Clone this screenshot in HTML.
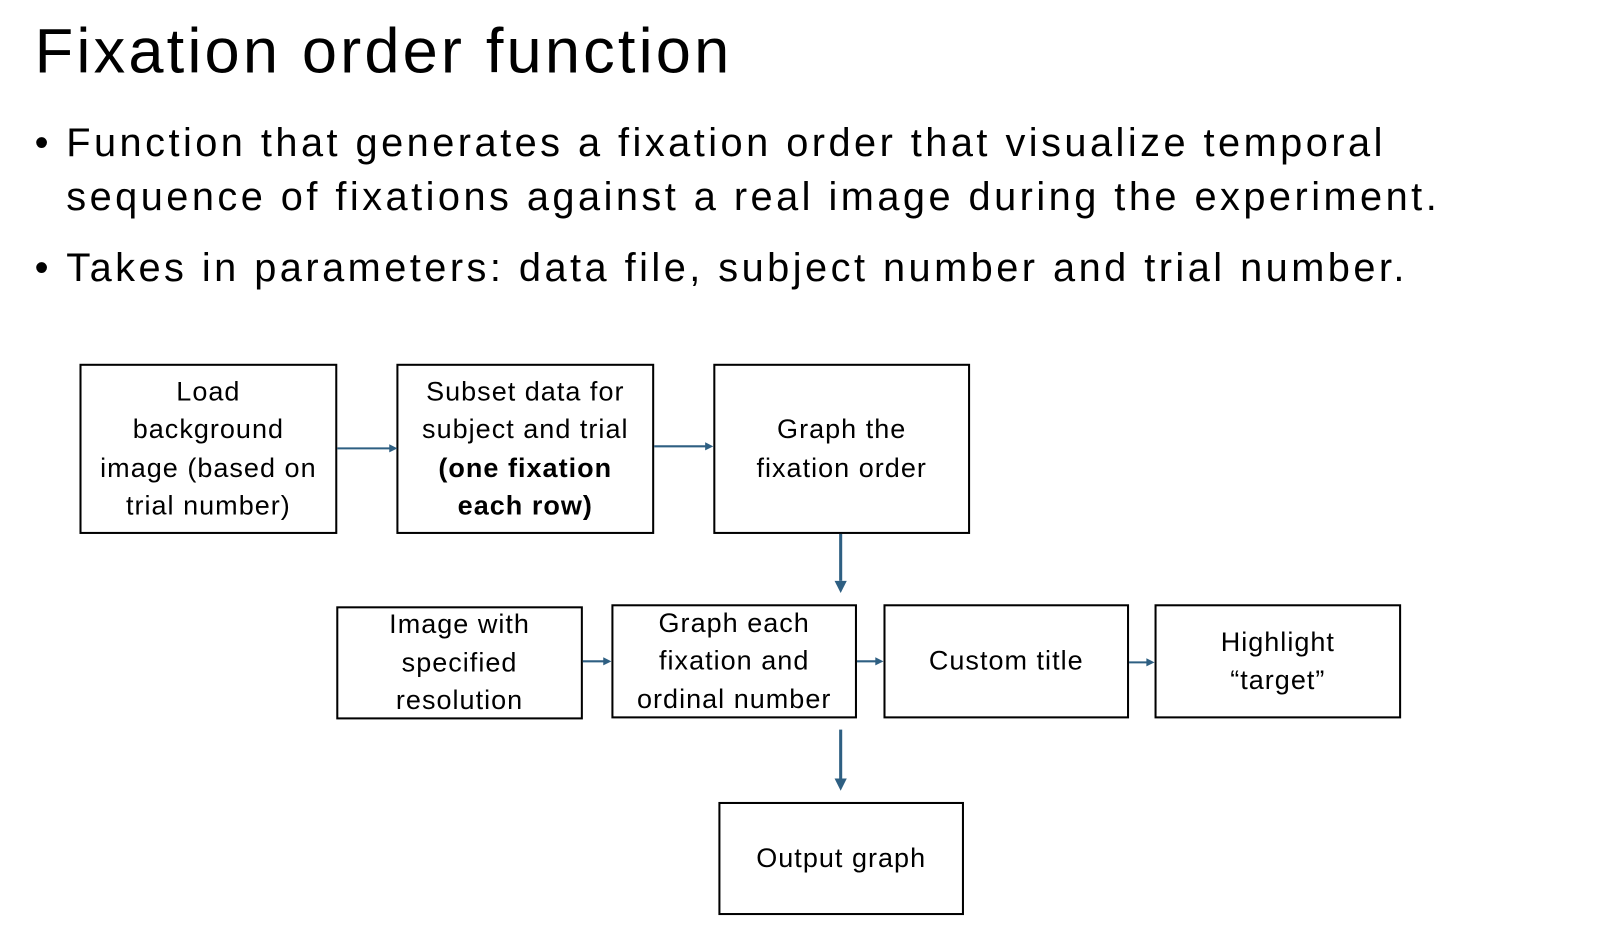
<!DOCTYPE html><html><head><style>
body{margin:0;width:1598px;height:932px;background:#fff;overflow:hidden;font-family:"Liberation Sans",sans-serif;color:#000}
#w{position:absolute;left:0;top:0;width:1570px;height:916px;transform:scale(1.019);transform-origin:0 0}
.t{position:absolute;left:34px;top:15px;font-size:62px;letter-spacing:3.1px;white-space:nowrap}
.b{position:absolute;left:34px;font-size:39px;line-height:53px;white-space:nowrap}
.b span{position:absolute;left:0}
.b div{margin-left:31px;letter-spacing:3.4px}
.x{position:absolute;border:2px solid #000;box-sizing:border-box;display:flex;align-items:center;justify-content:center;text-align:center;font-size:26.5px;line-height:37.5px;letter-spacing:1px}
</style></head><body><div id="w">
<div class="t">Fixation order function</div>
<div class="b" style="top:114px"><span>•</span><div>Function that generates a fixation order that visualize temporal<br>sequence of fixations against a real image during the experiment.</div></div>
<div class="b" style="top:237px"><span>•</span><div>Takes in parameters: data file, subject number and trial number.</div></div>
<div class="x" style="left:78px;top:357px;width:253px;height:167px"><div>Load<br>background<br>image (based on<br>trial number)</div></div>
<div class="x" style="left:389px;top:357px;width:253px;height:167px"><div>Subset data for<br>subject and trial<br><b>(one fixation<br>each row)</b></div></div>
<div class="x" style="left:700px;top:357px;width:252px;height:167px"><div>Graph the<br>fixation order</div></div>
<div class="x" style="left:330px;top:595px;width:242px;height:111px"><div>Image with<br>specified<br>resolution</div></div>
<div class="x" style="left:600px;top:593px;width:241px;height:112px"><div>Graph each<br>fixation and<br>ordinal number</div></div>
<div class="x" style="left:867px;top:593px;width:241px;height:112px"><div>Custom title</div></div>
<div class="x" style="left:1133px;top:593px;width:242px;height:112px"><div>Highlight<br>“target”</div></div>
<div class="x" style="left:705px;top:787px;width:241px;height:111px"><div>Output graph</div></div>
<svg width="1570" height="916" style="position:absolute;left:0;top:0" fill="#2e5f82" stroke="#2e5f82">
<line x1="331" y1="440" x2="384" y2="440" stroke-width="2"/><path d="M390 440 l-8 -4 v8z" stroke="none"/>
<line x1="642" y1="438" x2="694" y2="438" stroke-width="2"/><path d="M700 438 l-8 -4 v8z" stroke="none"/>
<line x1="825" y1="524" x2="825" y2="570" stroke-width="3"/><path d="M825 582 l-6 -12 h12z" stroke="none"/>
<line x1="572" y1="649" x2="594" y2="649" stroke-width="2"/><path d="M600 649 l-8 -4 v8z" stroke="none"/>
<line x1="841" y1="649" x2="861" y2="649" stroke-width="2"/><path d="M867 649 l-8 -4 v8z" stroke="none"/>
<line x1="1108" y1="650" x2="1127" y2="650" stroke-width="2"/><path d="M1133 650 l-8 -4 v8z" stroke="none"/>
<line x1="825" y1="716" x2="825" y2="764" stroke-width="3"/><path d="M825 776 l-6 -12 h12z" stroke="none"/>
</svg>
</div></body></html>
